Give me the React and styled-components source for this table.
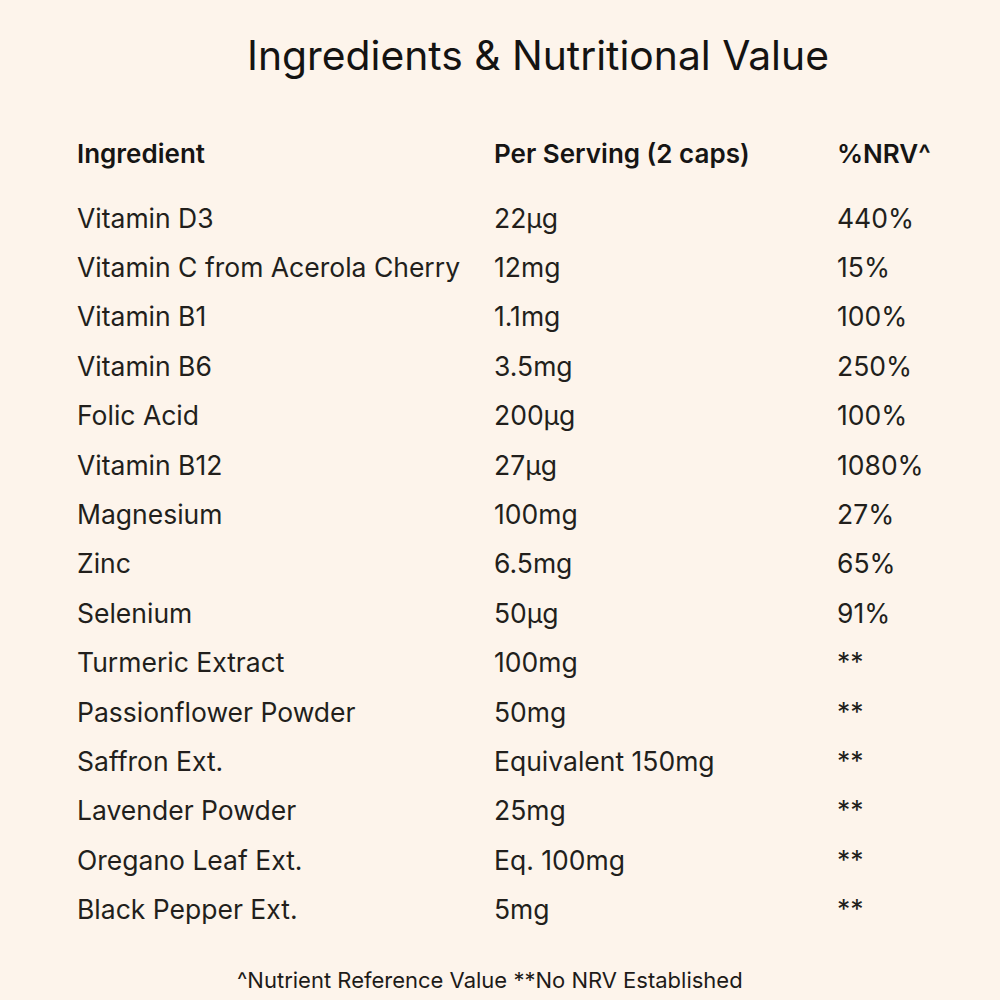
import React from "react";
import styled, { createGlobalStyle } from "styled-components";

const Global = createGlobalStyle`
  html, body { margin: 0; padding: 0; background: #fdf4eb; }
  body { font-family: Inter, "Noto Sans", "Liberation Sans", sans-serif; color: #1d1b19; }
`;

const Page = styled.div`
  width: 1000px;
  height: 1000px;
  background: #fdf4eb;
  box-sizing: border-box;
  padding-top: 31px;
  display: flex;
  flex-direction: column;
  overflow: hidden;
`;

const Title = styled.h1`
  margin: 0;
  padding-left: 247px;
  font-size: 40.8px;
  line-height: 48px;
  font-weight: 400;
  color: #141312;
`;

const Table = styled.div`
  margin-top: 49.5px;
  padding-left: 77px;
  display: grid;
  grid-template-columns: 417px 343px 1fr;
`;

const Cell = styled.div`
  font-size: ${(p) => (p.$head ? "26px" : "26.5px")};
  line-height: ${(p) => (p.$head ? "50px" : "49.4px")};
  font-weight: ${(p) => (p.$head ? 600 : 400)};
  color: ${(p) => (p.$head ? "#161514" : "#221f1c")};
  margin-bottom: ${(p) => (p.$head ? "15px" : "0")};
  white-space: nowrap;
`;

const Footer = styled.p`
  margin: 32.4px 0 0;
  padding-left: 237px;
  font-size: 22px;
  line-height: 26px;
  color: #1d1b19;
`;

const rows = [
  ["Vitamin D3", "22µg", "440%"],
  ["Vitamin C from Acerola Cherry", "12mg", "15%"],
  ["Vitamin B1", "1.1mg", "100%"],
  ["Vitamin B6", "3.5mg", "250%"],
  ["Folic Acid", "200µg", "100%"],
  ["Vitamin B12", "27µg", "1080%"],
  ["Magnesium", "100mg", "27%"],
  ["Zinc", "6.5mg", "65%"],
  ["Selenium", "50µg", "91%"],
  ["Turmeric Extract", "100mg", "**"],
  ["Passionflower Powder", "50mg", "**"],
  ["Saffron Ext.", "Equivalent 150mg", "**"],
  ["Lavender Powder", "25mg", "**"],
  ["Oregano Leaf Ext.", "Eq. 100mg", "**"],
  ["Black Pepper Ext.", "5mg", "**"],
];

export default function App() {
  return (
    <>
      <Global />
      <Page>
        <Title>Ingredients &amp; Nutritional Value</Title>
        <Table>
          <Cell $head>Ingredient</Cell>
          <Cell $head>Per Serving (2 caps)</Cell>
          <Cell $head>%NRV^</Cell>
          {rows.map((r) => (
            <React.Fragment key={r[0]}>
              <Cell>{r[0]}</Cell>
              <Cell>{r[1]}</Cell>
              <Cell>{r[2]}</Cell>
            </React.Fragment>
          ))}
        </Table>
        <Footer>^Nutrient Reference Value **No NRV Established</Footer>
      </Page>
    </>
  );
}
